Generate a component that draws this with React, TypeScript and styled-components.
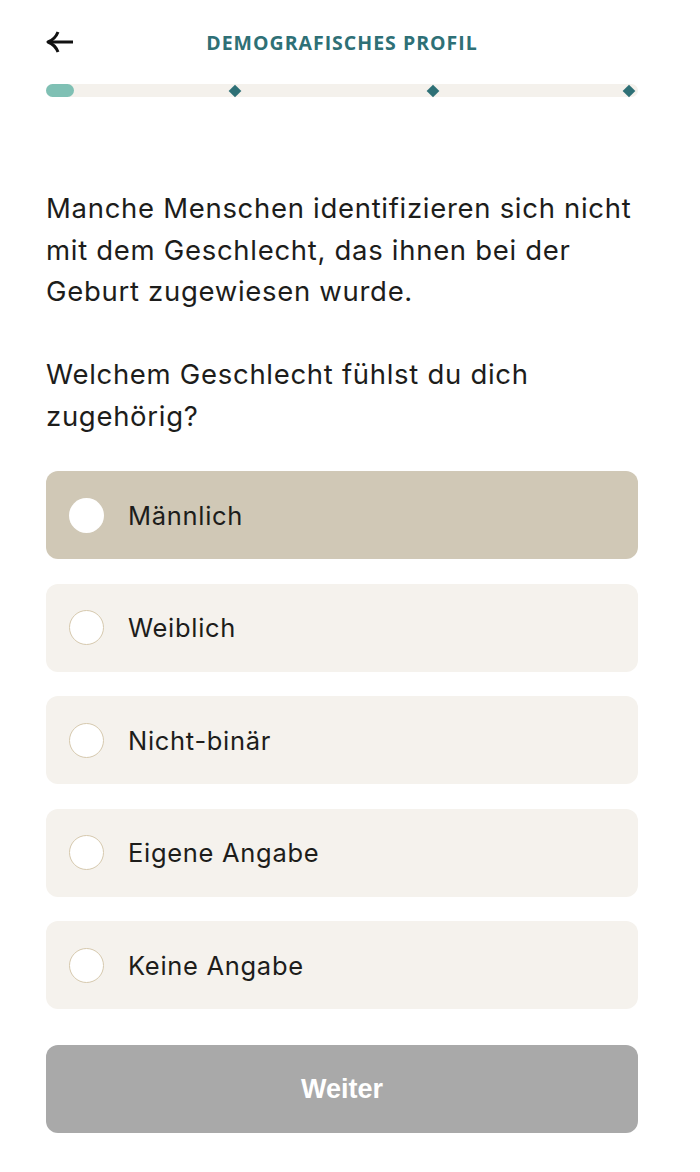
import React, { useState } from 'react';
import styled, { createGlobalStyle } from 'styled-components';

const GlobalStyle = createGlobalStyle`
  html, body {
    margin: 0;
    padding: 0;
    background: #ffffff;
  }
  body {
    font-family: Inter, "Liberation Sans", sans-serif;
    color: #1d1d1b;
  }
`;

const Page = styled.div`
  width: 592px;
  padding: 0 62px 0 46px;
  box-sizing: content-box;
`;

const Header = styled.div`
  height: 84px;
  display: grid;
  grid-template-columns: 40px 1fr 40px;
  align-items: center;
`;

const BackButton = styled.button`
  border: 0;
  background: none;
  padding: 0;
  display: flex;
  align-items: center;
  cursor: pointer;
`;

const Title = styled.h1`
  margin: 0;
  text-align: center;
  font-family: "Open Sans", "Liberation Sans", sans-serif;
  font-weight: 700;
  font-size: 19.5px;
  letter-spacing: 1px;
  color: #2e7076;
`;

const Progress = styled.div`
  position: relative;
  height: 13px;
  border-radius: 7px;
  background: #f4f1ec;
`;

const ProgressFill = styled.div`
  height: 100%;
  border-radius: 7px;
  background: #7fc0b4;
`;

const Marker = styled.span`
  position: absolute;
  top: 50%;
  width: 9px;
  height: 9px;
  background: #2e7076;
  transform: translate(-50%, -50%) rotate(45deg);
`;

const Intro = styled.p`
  margin: 91px 0 0;
  font-size: 27.5px;
  line-height: 41.5px;
  letter-spacing: 0.7px;
`;

const Question = styled(Intro)`
  margin-top: 41.5px;
`;

const Options = styled.div`
  margin-top: 34px;
  display: flex;
  flex-direction: column;
  gap: 24.5px;
`;

const Option = styled.button<{ $selected: boolean }>`
  height: 88px;
  border: 0;
  border-radius: 12px;
  padding: 0 0 0 23px;
  display: flex;
  align-items: center;
  gap: 24px;
  background: ${(p) => (p.$selected ? '#d0c8b6' : '#f5f2ed')};
  font-family: Inter, "Liberation Sans", sans-serif;
  font-size: 25.5px;
  letter-spacing: 0.7px;
  color: #1d1d1b;
  text-align: left;
  cursor: pointer;
`;

const Radio = styled.span<{ $selected: boolean }>`
  width: 35px;
  height: 35px;
  border-radius: 50%;
  box-sizing: border-box;
  background: #ffffff;
  border: ${(p) => (p.$selected ? '0' : '1.5px solid #d6c9ae')};
  flex-shrink: 0;
`;

const NextButton = styled.button`
  margin-top: 36px;
  width: 100%;
  height: 88px;
  border: 0;
  border-radius: 12px;
  background: #a9a9a9;
  color: #ffffff;
  font-family: "Liberation Sans", Arial, sans-serif;
  font-weight: 700;
  font-size: 27px;
`;

const options = ['Männlich', 'Weiblich', 'Nicht-binär', 'Eigene Angabe', 'Keine Angabe'];
const markers = [32, 65.3, 98.5];

const App = () => {
  const [selected, setSelected] = useState<number>(0);

  return (
    <>
      <GlobalStyle />
      <Page>
        <Header>
          <BackButton aria-label="Zurück">
            <svg width="28" height="24" viewBox="0 0 28 24" fill="none">
              <path d="M27 12H4" stroke="#111" strokeWidth="3" />
              <path d="M12 2C10 7 6 10.5 2 12C6 13.5 10 17 12 22" stroke="#111" strokeWidth="3" strokeLinejoin="round" />
            </svg>
          </BackButton>
          <Title>DEMOGRAFISCHES PROFIL</Title>
        </Header>
        <Progress>
          <ProgressFill style={{ width: '4.8%' }} />
          {markers.map((m) => (
            <Marker key={m} style={{ left: `${m}%` }} />
          ))}
        </Progress>
        <Intro>
          Manche Menschen identifizieren sich nicht mit dem Geschlecht, das ihnen bei der Geburt
          zugewiesen wurde.
        </Intro>
        <Question>Welchem Geschlecht fühlst du dich zugehörig?</Question>
        <Options>
          {options.map((label, i) => (
            <Option key={label} $selected={selected === i} onClick={() => setSelected(i)}>
              <Radio $selected={selected === i} />
              {label}
            </Option>
          ))}
        </Options>
        <NextButton>Weiter</NextButton>
      </Page>
    </>
  );
};

export default App;
